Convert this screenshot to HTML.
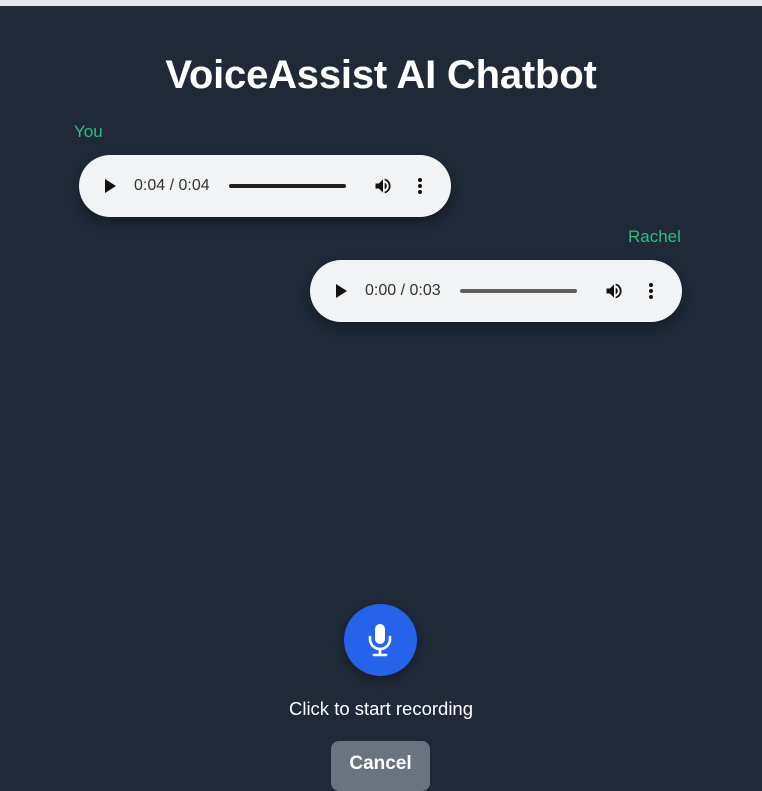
<!DOCTYPE html>
<html><head><meta charset="utf-8"><style>
*{margin:0;padding:0;box-sizing:border-box}
body{width:762px;height:786px;overflow:hidden;background:#1f2937;font-family:"Liberation Sans",Arial,sans-serif;position:relative}
.top{position:absolute;left:0;top:0;width:762px;height:6px;background:#e5e7eb}
h1{position:absolute;left:0;width:762px;top:53px;text-align:center;color:#fff;font-size:40px;font-weight:bold;letter-spacing:-0.2px}
.lbl{position:absolute;font-size:17px;color:#2fbf7c}
.player{position:absolute;width:372px;height:62px;border-radius:31px;background:#f1f3f4;box-shadow:0 6px 12px rgba(0,0,0,.3)}
.play{position:absolute;left:26px;top:24px;width:0;height:0;border-left:11px solid #111;border-top:7px solid transparent;border-bottom:7px solid transparent}
.time{position:absolute;left:55px;top:22px;font-size:16px;color:#333}
.bar{position:absolute;left:150px;top:29px;width:117px;height:4px;border-radius:2px}
.dots{position:absolute;left:339px;top:23px;width:4px}
.dots i{display:block;width:4px;height:4px;border-radius:2px;background:#111;margin-bottom:2px}
.mic{position:absolute;left:344px;top:604px;width:73px;height:72px;border-radius:50%;background:#2563eb;box-shadow:0 4px 10px rgba(0,0,0,.3)}
.cap{position:absolute;left:0;width:762px;top:698px;text-align:center;color:#fff;font-size:18.5px}
.btn{position:absolute;left:331px;top:741px;width:99px;height:50px;border-radius:8px;background:#6b7280;color:#fff;font-weight:bold;font-size:19px;text-align:center;line-height:46px}
</style></head><body>
<div class="top"></div>
<h1>VoiceAssist AI Chatbot</h1>
<div class="lbl" style="left:74px;top:122px">You</div>
<div class="player" style="left:79px;top:155px">
<div class="play"></div><div class="time">0:04 / 0:04</div><div class="bar" style="background:#1f1f1f"></div>
<svg style="position:absolute;left:294px;top:21px" width="20" height="20" viewBox="0 0 24 24"><path fill="#111" d="M3 9v6h4l5 5V4L7 9H3zm13.5 3A4.5 4.5 0 0 0 14 8v8a4.5 4.5 0 0 0 2.5-4zM14 3.2v2.1a7 7 0 0 1 0 13.4v2.1a9 9 0 0 0 0-17.6z"/></svg>
<div class="dots"><i></i><i></i><i></i></div></div>
<div class="lbl" style="left:628px;top:227px">Rachel</div>
<div class="player" style="left:310px;top:260px">
<div class="play"></div><div class="time">0:00 / 0:03</div><div class="bar" style="background:#5f5f5f"></div>
<svg style="position:absolute;left:294px;top:21px" width="20" height="20" viewBox="0 0 24 24"><path fill="#111" d="M3 9v6h4l5 5V4L7 9H3zm13.5 3A4.5 4.5 0 0 0 14 8v8a4.5 4.5 0 0 0 2.5-4zM14 3.2v2.1a7 7 0 0 1 0 13.4v2.1a9 9 0 0 0 0-17.6z"/></svg>
<div class="dots"><i></i><i></i><i></i></div></div>
<div class="mic"><svg style="position:absolute;left:22px;top:18px" width="28" height="36" viewBox="0 0 28 36"><rect x="9" y="2" width="10" height="20" rx="5" fill="#fff"/><path d="M4 15v2a10 10 0 0 0 20 0v-2" stroke="#fff" stroke-width="2.6" fill="none" stroke-linecap="round"/><path d="M14 27v5M8 33h12" stroke="#fff" stroke-width="2.6" stroke-linecap="round"/></svg></div>
<div class="cap">Click to start recording</div>
<div class="btn">Cancel</div>
</body></html>
